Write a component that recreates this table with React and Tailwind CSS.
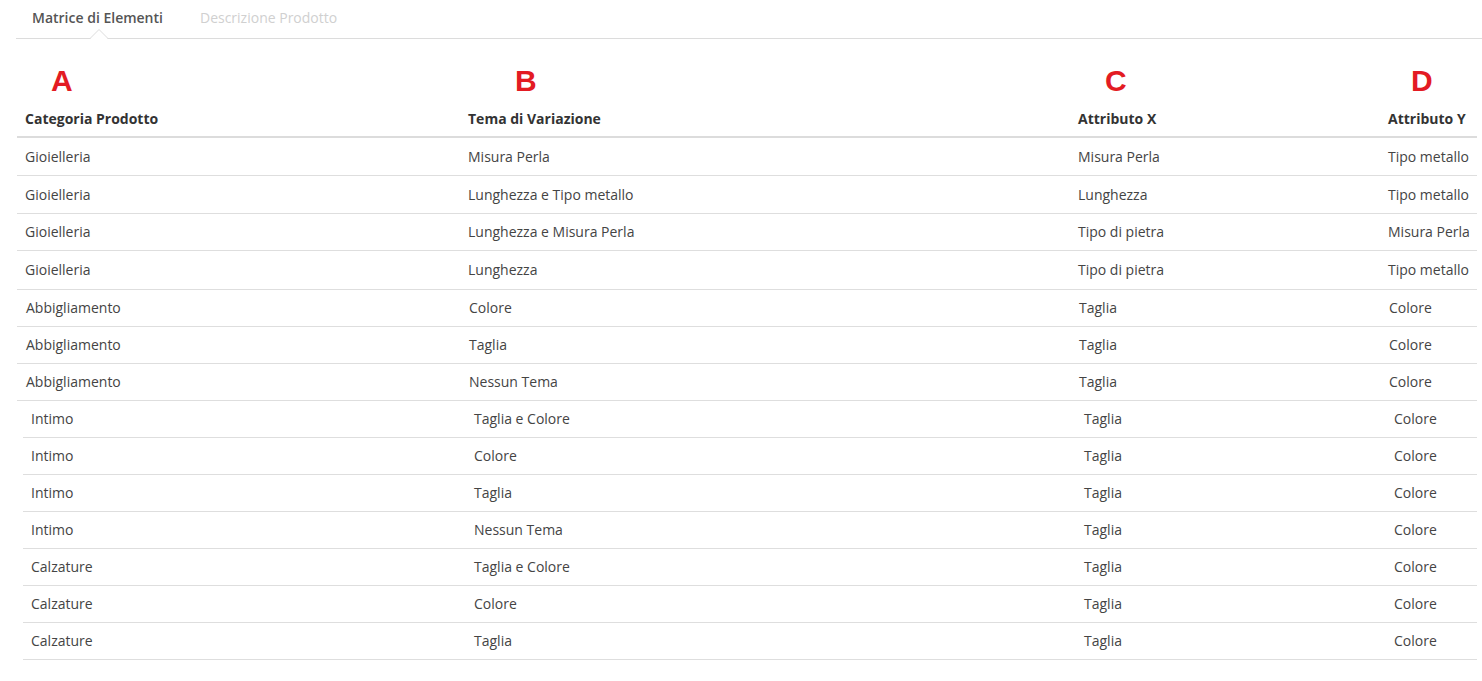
import React from "react";

const COLS = "grid grid-cols-[443px_610px_310px_1fr]";

const groups = [
  {
    wrap: "ml-[17px] w-[1460px]",
    pad: "pl-[8px]",
    rows: [
      ["Gioielleria", "Misura Perla", "Misura Perla", "Tipo metallo", "h-[36px]"],
      ["Gioielleria", "Lunghezza e Tipo metallo", "Lunghezza", "Tipo metallo", "h-[36px]"],
      ["Gioielleria", "Lunghezza e Misura Perla", "Tipo di pietra", "Misura Perla", "h-[35px]"],
      ["Gioielleria", "Lunghezza", "Tipo di pietra", "Tipo metallo", "h-[37px]"],
    ],
  },
  {
    wrap: "ml-[17px] w-[1460px]",
    pad: "pl-[9px]",
    rows: [
      ["Abbigliamento", "Colore", "Taglia", "Colore", "h-[35px]"],
      ["Abbigliamento", "Taglia", "Taglia", "Colore", "h-[35px]"],
      ["Abbigliamento", "Nessun Tema", "Taglia", "Colore", "h-[35px]"],
    ],
  },
  {
    wrap: "ml-[23px] w-[1454px]",
    pad: "pl-[8px]",
    rows: [
      ["Intimo", "Taglia e Colore", "Taglia", "Colore", "h-[35px]"],
      ["Intimo", "Colore", "Taglia", "Colore", "h-[35px]"],
      ["Intimo", "Taglia", "Taglia", "Colore", "h-[35px]"],
      ["Intimo", "Nessun Tema", "Taglia", "Colore", "h-[35px]"],
      ["Calzature", "Taglia e Colore", "Taglia", "Colore", "h-[35px]"],
      ["Calzature", "Colore", "Taglia", "Colore", "h-[35px]"],
      ["Calzature", "Taglia", "Taglia", "Colore", "h-[35px]"],
    ],
  },
];

function Tabs() {
  return (
    <div className="relative ml-[16px] h-[39px] border-b border-[#dcdcdc] flex items-start">
      <div className="pl-[16px] pt-[7px] text-[14px] font-semibold text-[#555]">
        Matrice di Elementi
      </div>
      <div className="pl-[37px] pt-[7px] text-[14px] text-[#d0d0d0]">
        Descrizione Prodotto
      </div>
      <svg
        className="absolute left-[74px] bottom-[-1px]"
        width="18"
        height="11"
        viewBox="0 0 18 11"
      >
        <path d="M0 10.5 L9 1.5 L18 10.5" fill="#fff" stroke="#dcdcdc" strokeWidth="1" />
        <rect x="1" y="10" width="16" height="1" fill="#fff" />
      </svg>
    </div>
  );
}

export default function App() {
  return (
    <div
      className="w-[1482px] h-[681px] bg-white overflow-hidden text-[#444]"
      style={{ fontFamily: "'Open Sans', 'Noto Sans', sans-serif" }}
    >
      <Tabs />

      <div className="ml-[17px] w-[1460px]">
        <div
          className={`${COLS} h-[61px] items-end pb-[4px] text-[30px] leading-none font-bold text-[#e31b23]`}
          style={{ fontFamily: "'Liberation Sans', Arial, sans-serif" }}
        >
          <div className="pl-[34px]">A</div>
          <div className="pl-[55px]">B</div>
          <div className="pl-[35px]">C</div>
          <div className="pl-[31px]">D</div>
        </div>
        <div className={`${COLS} h-[38px] items-center border-b-2 border-[#dcdcdc] text-[14px] font-bold text-[#333]`}>
          <div className="pl-[8px]">Categoria Prodotto</div>
          <div className="pl-[8px]">Tema di Variazione</div>
          <div className="pl-[8px]">Attributo X</div>
          <div className="pl-[8px]">Attributo Y</div>
        </div>
      </div>

      {groups.map((g, gi) => (
        <div key={gi} className={g.wrap}>
          {g.rows.map((r, ri) => (
            <div
              key={ri}
              className={`${COLS} ${r[4]} box-content pb-[1px] items-center border-b border-[#dedede] text-[14px]`}
            >
              {r.slice(0, 4).map((c, ci) => (
                <div key={ci} className={`${g.pad} whitespace-nowrap`}>
                  {c}
                </div>
              ))}
            </div>
          ))}
        </div>
      ))}
    </div>
  );
}
